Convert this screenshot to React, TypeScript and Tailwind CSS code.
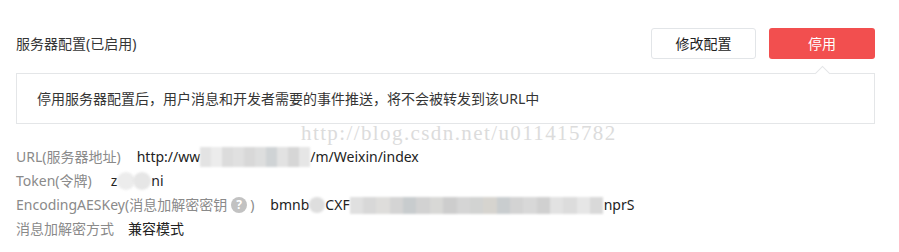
import React from "react";

function Blur({ w, h = 18, tones }: { w: number; h?: number; tones: string[] }) {
  const seg = w / tones.length;
  return (
    <span className="inline-flex items-stretch align-middle blur-[1px]" style={{ width: w, height: h }}>
      {tones.map((t, i) => (
        <span key={i} style={{ width: seg, backgroundColor: t }} />
      ))}
    </span>
  );
}

export default function App() {
  const font = { fontFamily: '"Noto Sans", "Noto Sans CJK SC", sans-serif' };
  return (
    <div className="relative w-[899px] h-[252px] bg-white pl-4 pr-6 pt-[28px] text-[14px]" style={font}>
      <div className="flex items-center justify-between h-[31px]">
        <div className="text-[#353535] leading-[20px]">服务器配置(已启用)</div>
        <div className="flex gap-[13px]">
          <button className="w-[105px] h-[31px] rounded-[3px] border border-[#e2e5e8] bg-white text-[#222] leading-[29px]">
            修改配置
          </button>
          <button className="w-[106px] h-[31px] rounded-[3px] bg-[#f24f4f] text-white leading-[31px]">
            停用
          </button>
        </div>
      </div>
      <div className="relative mt-[14px] h-[51px] border border-[#e4e6e8] pl-5 flex items-center text-[#353535]">
        <span className="leading-[20px]">停用服务器配置后，用户消息和开发者需要的事件推送，将不会被转发到该URL中</span>
        <span className="absolute right-[46px] -top-[6px] w-[11px] h-[11px] rotate-45 bg-white border-l border-t border-[#e4e6e8]" />
      </div>
      <div className="mt-[21px] flex flex-col leading-[24px]">
        <div className="flex items-center">
          <span className="text-[#8a8a8a]">URL(服务器地址)</span>
          <span className="ml-4 text-[#222] flex items-center">
            http://ww
            <Blur w={110} h={20} tones={["#e3e3e3", "#ececec", "#dcdcdc", "#e0e0e0", "#d8d8d8", "#dddede", "#cfd3d5", "#e2e2e2", "#d6d6d6", "#e6e6e6"]} />
            /m/Weixin/index
          </span>
        </div>
        <div className="flex items-center">
          <span className="text-[#8a8a8a]">Token(令牌)</span>
          <span className="ml-[19px] text-[#222] flex items-center">
            z
            <span className="inline-flex items-center">
              <span className="w-[18px] h-[18px] rounded-full bg-[#ececec] blur-[1px]" />
              <span className="w-[18px] h-[18px] -ml-[2px] rounded-full bg-[#e6e6e6] blur-[1px]" />
            </span>
            ni
          </span>
        </div>
        <div className="flex items-center">
          <span className="text-[#8a8a8a] flex items-center">
            EncodingAESKey(消息加解密密钥
            <span className="ml-[4px] mr-[3px] w-[16px] h-[16px] rounded-full bg-[#c2c2c2] text-white text-[12px] font-bold leading-[16px] text-center">?</span>
            )
          </span>
          <span className="ml-4 text-[#222] flex items-center">
            bmnb
            <span className="w-[16px] h-[16px] rounded-full bg-[#dedede] blur-[1px]" />
            CXF
            <Blur w={254} h={17} tones={["#e0e0e0", "#d8d8d8", "#dedddb", "#d4d4d4", "#c8ccce", "#d2d2d2", "#d8d8d6", "#cdcdcd", "#d5d5d5", "#d2d3d2", "#d6d4cf", "#c9cdcf", "#d3d3d3", "#d8d8d8", "#d0d0d0", "#e2e2e2", "#dcdcdc", "#e6e6e6", "#d9d9d9"]} />
            nprS
          </span>
        </div>
        <div className="flex items-center">
          <span className="text-[#8a8a8a]">消息加解密方式</span>
          <span className="ml-[14px] text-[#222]">兼容模式</span>
        </div>
      </div>
      <div
        className="absolute left-[301px] top-[122px] text-[#dcdcdc] text-[21px] leading-[22px] tracking-[1.4px] pointer-events-none"
        style={{ fontFamily: '"Liberation Serif", serif' }}
      >
        http://blog.csdn.net/u011415782
      </div>
    </div>
  );
}
